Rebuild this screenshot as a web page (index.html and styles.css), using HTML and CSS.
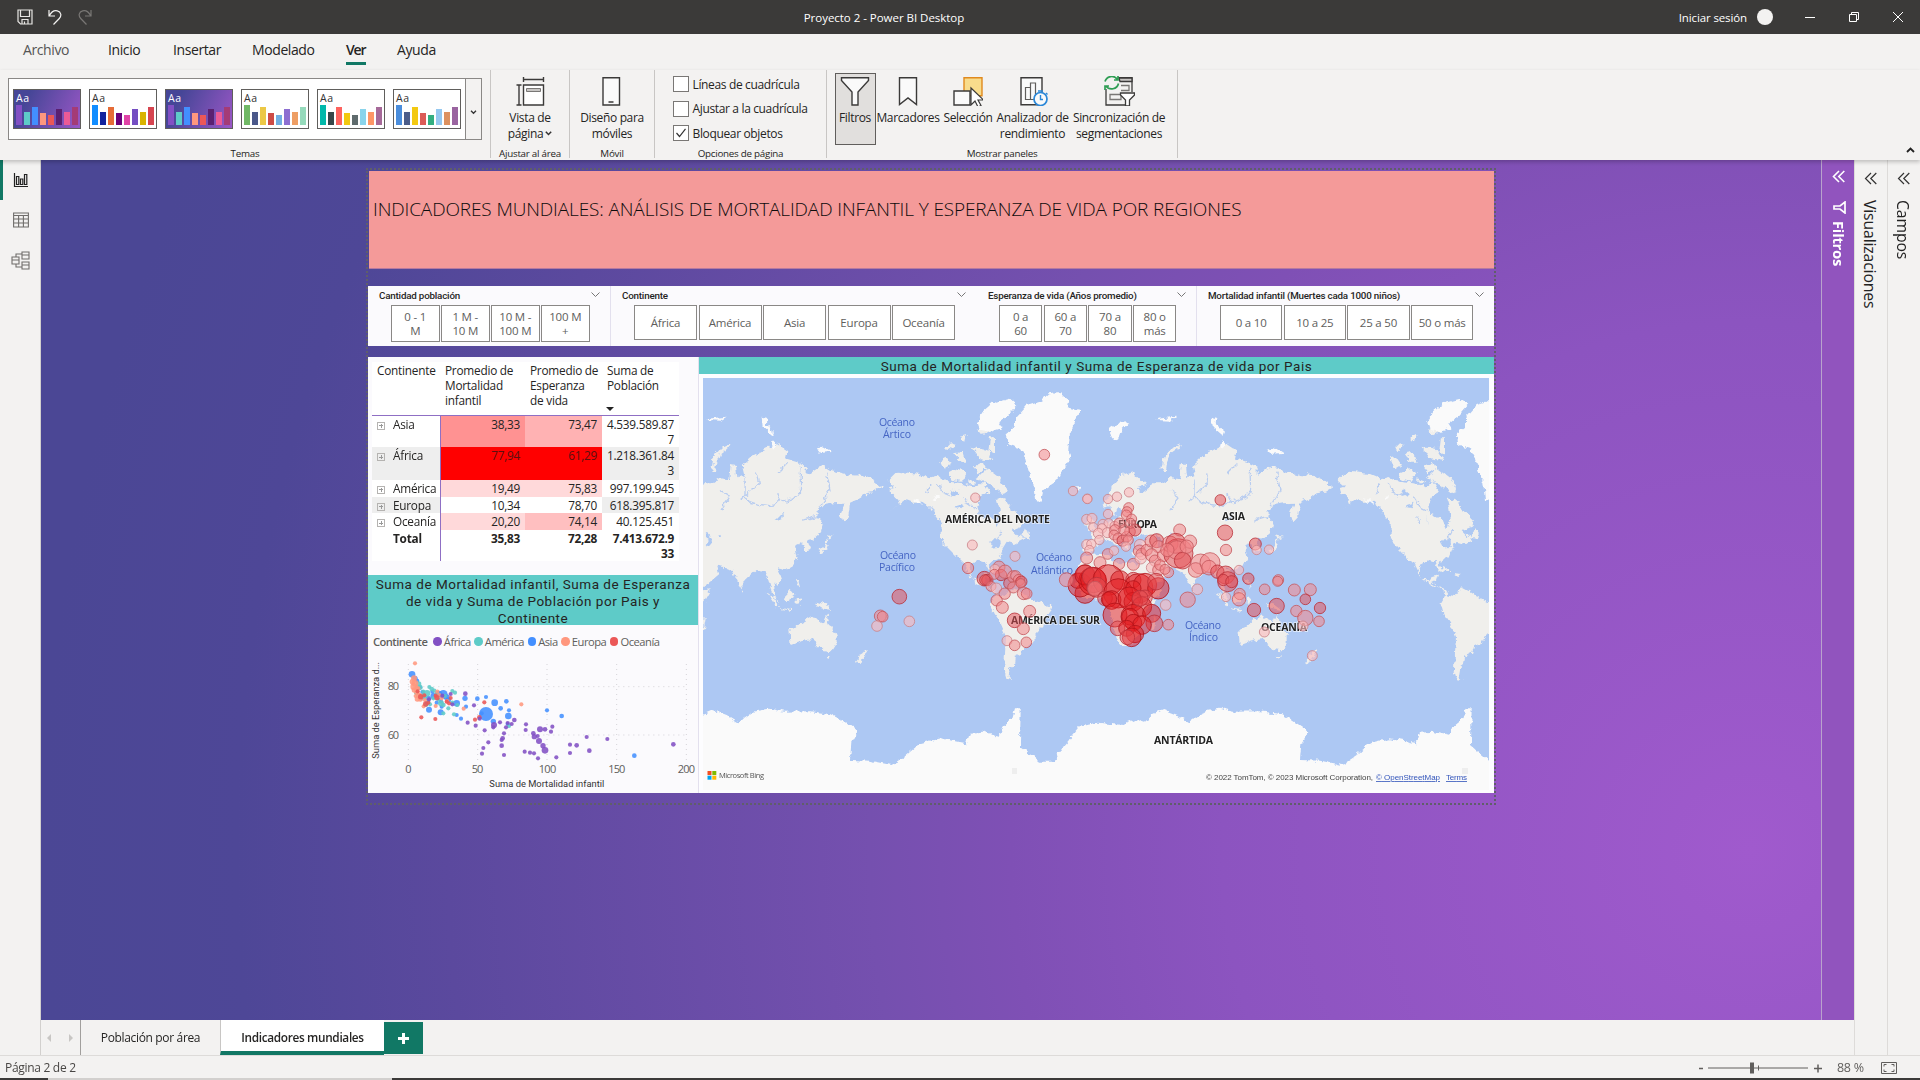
FILE: index.html
```html
<!DOCTYPE html>
<html lang="es">
<head>
<meta charset="utf-8">
<title>Proyecto 2 - Power BI Desktop</title>
<link rel="stylesheet" href="styles.css">
</head>
<body>
<header class="titlebar">
  <div class="quick">
    <svg width="16" height="16" viewBox="0 0 16 16" fill="none" stroke="#e8e6e4" stroke-width="1.2"><path d="M1 1h14v14H3.5L1 12.500zM3.500 1v6.500h9V1M5 15v-4.500h6V15M7.500 12.500V15"/></svg>
    <svg width="16" height="16" viewBox="0 0 16 16" fill="none" stroke="#f3f2f1" stroke-width="1.2"><path d="M2 1v6h6M2.300 6.700C4 3.500 7 1 10.300 1.800c4 1 4.500 5 2 7.700L6.500 15.500"/></svg>
    <svg width="16" height="16" viewBox="0 0 16 16" fill="none" stroke="#797775" stroke-width="1.200"><path d="M14 1v6H8M13.700 6.700C12 3.500 9 1 5.700 1.800c-4 1-4.500 5-2 7.700l5.800 6"/></svg>
  </div>
  <div class="app-title">Proyecto 2 - Power BI Desktop</div>
  <div class="window">
    <span class="signin">Iniciar sesión</span><span class="avatar"></span>
    <svg width="10" height="10" viewBox="0 0 10 10" stroke="#fff" fill="none"><path d="M0 5.500h10"/></svg>
    <svg width="10" height="10" viewBox="0 0 10 10" stroke="#fff" fill="none"><path d="M.5 2.500h7v7h-7zM2.500 2.500v-2h7v7h-2"/></svg>
    <svg width="10" height="10" viewBox="0 0 10 10" stroke="#fff" fill="none"><path d="M0 0l10 10M10 0L0 10"/></svg>
  </div>
</header>

<nav class="menu">
  <span class="m-archivo">Archivo</span><span class="m-inicio">Inicio</span><span class="m-insertar">Insertar</span><span class="m-modelado">Modelado</span><span class="m-ver active">Ver</span><span class="m-ayuda">Ayuda</span>
</nav>

<section class="ribbon">
  <div class="group g-themes">
    <div class="gallery"><div class="thumbs" id="thumbs"></div><div class="more"><svg width="7" height="5" viewBox="0 0 7 5" fill="none" stroke="#333" stroke-width="1.300"><path d="M1 .8l2.500 2.500L6 .8"/></svg></div></div>
    <div class="caption">Temas</div>
  </div>
  <div class="group g-view">
    <div class="btn"><svg width="30" height="30" viewBox="0 0 30 30" fill="none" stroke="#3b3a39" stroke-width="1.400"><path d="M8.500 9h20v20h-20z" fill="#fff"/><path d="M11.500 12.500h14v3h-14z" fill="#c8c6c4" stroke="#797775" stroke-width="1"/><path d="M8.500 3.500h20M8.500 1v5M28.500 1v5M4 9v20M1.500 9h5M1.500 29h5"/></svg><span>Vista de<br>página<svg class="mini" width="7" height="5" viewBox="0 0 7 5" fill="none" stroke="#333" stroke-width="1.500"><path d="M.8.800l2.700 2.700L6.200.800"/></svg></span></div>
    <div class="caption">Ajustar al área</div>
  </div>
  <div class="group g-mobile">
    <div class="btn"><svg width="30" height="30" viewBox="0 0 30 30" fill="#fafafa" stroke="#3b3a39" stroke-width="1.400"><path d="M6 1.700h16.500v27.300H6zM11.500 26h5"/></svg><span>Diseño para<br>móviles</span></div>
    <div class="caption">Móvil</div>
  </div>
  <div class="group g-options">
    <div class="checks">
      <label><i></i>Líneas de cuadrícula</label>
      <label><i></i>Ajustar a la cuadrícula</label>
      <label><i><svg width="12" height="10" viewBox="0 0 12 10" fill="none" stroke="#333" stroke-width="1.200"><path d="M1.500 5l3 3.500L10.500.800"/></svg></i>Bloquear objetos</label>
    </div>
    <div class="caption">Opciones de página</div>
  </div>
  <div class="group g-panels">
    <div class="panel-btns">
      <div class="btn b1 pressed"><svg width="30" height="30" viewBox="0 0 30 30" fill="#fafafa" stroke="#3b3a39" stroke-width="1.400"><path d="M1.500 1.700h27v2.800L18 16v13h-6V16L1.500 4.500z"/></svg><span>Filtros</span></div>
      <div class="btn b2"><svg width="30" height="30" viewBox="0 0 30 30" fill="#fafafa" stroke="#3b3a39" stroke-width="1.400"><path d="M6.500 1.700h17V28.500L15 22l-8.500 6.500z"/></svg><span>Marcadores</span></div>
      <div class="btn b3"><svg width="30" height="30" viewBox="0 0 30 30"><path d="M11 1.700h18v18H11z" fill="#f8dc8c" stroke="#e08a1e" stroke-width="1.400"/><path d="M1 15h16v14H1z" fill="#fafafa" stroke="#3b3a39" stroke-width="1.400"/><path d="M18 12v17l4-4 3 6 3-1.500-3-5.500h5.500z" fill="#fff" stroke="#3b3a39" stroke-width="1.200"/></svg><span>Selección</span></div>
      <div class="btn b4"><svg width="30" height="30" viewBox="0 0 30 30" fill="none" stroke="#3b3a39" stroke-width="1.400"><path d="M3 1.700h21v27H3z" fill="#fafafa"/><path d="M7.500 11.500h5v12h-5zM12.500 7h5v16.500h-5z" stroke="#605e5c" stroke-width="1.200"/><circle cx="22.500" cy="23" r="6.500" fill="#fafafa" stroke="#2b88d8" stroke-width="1.700"/><path d="M22.500 19v4.500H25M20 15h5M28 17l1.500 1.500" stroke="#2b88d8"/></svg><span>Analizador de<br>rendimiento</span></div>
      <div class="btn b5"><svg width="32" height="30" viewBox="0 0 32 30" fill="none" stroke="#3b3a39" stroke-width="1.300"><path d="M3 13v16h20M15 1.700h14V16" /><path d="M16 2h13v3.500H17z" fill="#c8c6c4"/><path d="M18 9.500h8v5h-8M7 18.500h11v5H7z" stroke="#797775"/><path d="M17.500 17h14v2L26.500 24v6h-4v-6l-5-5z" fill="#fff"/><path d="M2 5.500a7 7 0 0 1 12.500-2M15.500 7.500a7 7 0 0 1-12.500 2.500M15 0v4h-4M2 14v-4h4" stroke="#2f9e54" stroke-width="1.700"/></svg><span>Sincronización de<br>segmentaciones</span></div>
    </div>
    <div class="caption">Mostrar paneles</div>
  </div>
  <svg class="collapse" width="9" height="6" viewBox="0 0 9 6" fill="none" stroke="#222" stroke-width="1.800"><path d="M1 5l3.500-3.500L8 5"/></svg>
</section>

<main class="main">
  <aside class="rail">
    <div class="r on"><svg width="16" height="16" viewBox="0 0 16 16" fill="none" stroke="#222" stroke-width="1.200"><path d="M1.500 1v13.500H15M3.500 4.500h2.300v8H3.500zM7.500 7h2.300v5.500H7.500zM11.500 2.500h2.300v10h-2.300z"/></svg></div>
    <div class="r"><svg width="16" height="16" viewBox="0 0 16 16" fill="none" stroke="#6f6d6b" stroke-width="1.100"><path d="M.6 1h14.800v14H.6zM.6 3.500h14.800M.6 7h14.800M.6 11h14.800M5.600 3.500V15M10.400 3.500V15"/></svg></div>
    <div class="r"><svg width="19" height="19" viewBox="0 0 19 19" fill="none" stroke="#6f6d6b" stroke-width="1.100"><path d="M1 6h7v7H1zM1 9h7M11 1h7v7h-7zM11 4h7M11 11h7v7h-7zM11 14h7M5 6V3h6M5 13v3h6"/></svg></div>
  </aside>

  <div class="center">
    <div class="canvas">
      <div class="page">
        <div class="banner">INDICADORES MUNDIALES: ANÁLISIS DE MORTALIDAD INFANTIL Y ESPERANZA DE VIDA POR REGIONES</div>
        <div class="slicers">
          <div class="slicer s1"><div class="s-head">Cantidad población<svg width="9" height="6" viewBox="0 0 9 6"><path d="M.5.500l4 4 4-4"/></svg></div><div class="opts tall"><b>0 - 1<br>M</b><b>1 M -<br>10 M</b><b>10 M -<br>100 M</b><b>100 M<br>+</b></div></div>
          <div class="slicer s2"><div class="s-head">Continente<svg width="9" height="6" viewBox="0 0 9 6"><path d="M.5.500l4 4 4-4"/></svg></div><div class="opts"><b>África</b><b>América</b><b>Asia</b><b>Europa</b><b>Oceanía</b></div></div>
          <div class="slicer s3"><div class="s-head">Esperanza de vida (Años promedio)<svg width="9" height="6" viewBox="0 0 9 6"><path d="M.5.500l4 4 4-4"/></svg></div><div class="opts tall"><b>0 a<br>60</b><b>60 a<br>70</b><b>70 a<br>80</b><b>80 o<br>más</b></div></div>
          <div class="slicer s4"><div class="s-head">Mortalidad infantil (Muertes cada 1000 niños)<svg width="9" height="6" viewBox="0 0 9 6"><path d="M.5.500l4 4 4-4"/></svg></div><div class="opts"><b>0 a 10</b><b>10 a 25</b><b>25 a 50</b><b>50 o más</b></div></div>
        </div>
        <div class="content">
          <div class="left">
            <table class="matrix">
              <colgroup><col class="c1"><col class="c2"><col class="c3"><col class="c4"></colgroup>
              <thead><tr><th>Continente</th><th>Promedio de<br>Mortalidad<br>infantil</th><th>Promedio de<br>Esperanza<br>de vida</th><th>Suma de<br>Población<i class="sort"></i></th></tr></thead>
              <tbody>
                <tr class="two"><td><i class="exp"></i>Asia</td><td class="p3">38,33</td><td class="p2">73,47</td><td>4.539.589.87<br>7</td></tr>
                <tr class="two alt"><td><i class="exp"></i>África</td><td class="p4">77,94</td><td class="p4">61,29</td><td>1.218.361.84<br>3</td></tr>
                <tr><td><i class="exp"></i>América</td><td class="p1">19,49</td><td class="p1">75,83</td><td>997.199.945</td></tr>
                <tr class="alt"><td><i class="exp"></i>Europa</td><td class="p0">10,34</td><td class="p0">78,70</td><td>618.395.817</td></tr>
                <tr><td><i class="exp"></i>Oceanía</td><td class="p1">20,20</td><td class="p2b">74,14</td><td>40.125.451</td></tr>
                <tr class="total"><td>Total</td><td>35,83</td><td>72,28</td><td>7.413.672.9<br>33</td></tr>
              </tbody>
            </table>
            <div class="teal three">Suma de Mortalidad infantil, Suma de Esperanza<br>de vida y Suma de Población por Pais y<br>Continente</div>
            <div class="legend"><strong>Continente</strong><span class="k1">África</span><span class="k2">América</span><span class="k3">Asia</span><span class="k4">Europa</span><span class="k5">Oceanía</span></div>
            <svg class="scatter" width="331" height="137" viewBox="9 258 993 411">
              <path class="grid" d="M130 282V570M338 282V570M546 282V570M755 282V570M964 282V570M130 350H964M130 495H964"/>
              <g id="dots"></g>
              <g class="tick">
                <text x="68" y="360" textLength="34">80</text><text x="68" y="507" textLength="34">60</text>
                <text x="121" y="609" textLength="18">0</text><text x="320" y="609" textLength="35">50</text><text x="521" y="609" textLength="53">100</text><text x="730" y="609" textLength="51">150</text><text x="938" y="609" textLength="52">200</text>
              </g>
              <text class="axis" x="373" y="650" textLength="345">Suma de Mortalidad infantil</text>
              <text class="axis" transform="translate(43 566) rotate(-90)" textLength="290">Suma de Esperanza d...</text>
            </svg>
          </div>
          <div class="right">
            <div class="teal one">Suma de Mortalidad infantil y Suma de Esperanza de vida por Pais</div>
            <svg class="map" width="786" height="412" viewBox="703 378 786 412">
              <defs>
                <filter id="coast" x="-2%" y="-2%" width="104%" height="104%"><feTurbulence type="fractalNoise" baseFrequency=".16" numOctaves="3" seed="4" result="n"/><feDisplacementMap in="SourceGraphic" in2="n" scale="7" xChannelSelector="R" yChannelSelector="G"/></filter>
                <g id="world">
                  <g transform="translate(700 350) scale(.33333)">
                    <path class="land" d="M563 392L590 365 625 368 660 372 690 385 715 378 745 395 790 400 830 412 850 395 868 425 842 440 832 470 838 490 858 500 882 512 892 535 902 505 897 470 890 445 915 450 935 480 950 490 975 515 965 527 935 540 955 560 978 565 945 582 920 575 905 600 897 620 872 632 866 645 878 665 866 663 858 634 835 630 818 642 808 665 815 685 835 690 845 677 864 674 858 693 845 700 872 715 885 720 892 733 915 738 935 712 960 725 990 745 1010 755 1050 768 1055 780 1035 805 1030 830 1010 850 995 880 972 890 966 910 945 920 942 945 930 955 926 980 938 990 920 986 912 960 915 910 918 860 900 820 880 790 872 760 888 732 862 712 835 700 810 680 790 640 770 620 750 600 730 580 722 560 722 520 700 490 690 470 670 455 640 455 620 448 590 470 570 486 600 463 595 450 575 430 570 415 585 410Z"/>
                    <path class="land" d="M720 325L738 320 755 345 735 358ZM745 370L775 355 800 370 785 395 755 390ZM830 385L860 355 900 385 925 425 905 432 880 412ZM735 295L750 280 765 285 745 300ZM780 260L800 255 795 275ZM765 310L790 305 800 335 775 335ZM815 290L860 300 880 330 840 325ZM820 350L850 335 860 355 835 370ZM895 460L915 445 935 480 955 495 935 500ZM830 240L858 225 868 245 845 258ZM870 262L885 262 885 310 865 305ZM975 535L990 545 985 565 965 560ZM868 655L885 655 900 667 875 664ZM910 670L935 672 925 680ZM805 385L820 390 825 400 805 400Z"/>
                    <path class="ice" d="M832 215L850 185 880 160 930 146 952 165 925 195 895 220 905 235 870 245 840 240ZM945 205L980 165 1020 152 1045 130 1080 126 1105 150 1100 175 1142 183 1125 215 1110 250 1105 300 1112 328 1088 360 1060 400 1030 420 1022 452 1005 450 1000 400 985 360 975 320 960 295 925 285 920 250 945 232Z"/>
                    <path class="lake" d="M755 425L770 420 775 435 760 440ZM765 470L790 462 785 474ZM868 572L900 570 905 590 880 592ZM830 500L835 525"/>
                    <path class="river" d="M715 400L725 425 760 440M790 440L810 470 830 480M800 500L815 520M690 400L680 430M905 540L890 570"/>
                    <path class="ice" d="M640 445L655 448 672 464 660 462ZM700 438L716 436 716 446 704 448Z"/>
                  </g>
                  <g transform="translate(1080 350) scale(.33333)">
                    <path class="land" d="M65 470L85 440 95 410 125 375 155 365 198 405 170 415 188 428 205 415 215 400 245 400 270 385 298 388 302 342 318 345 322 385 345 375 338 345 365 320 400 300 440 280 470 300 465 325 500 335 530 350 530 375 560 355 580 348 600 360 660 375 700 378 730 390 757 412 735 425 710 430 690 445 660 458 655 500 640 517 632 490 645 458 610 460 580 465 563 485 562 502 578 520 570 550 548 568 532 570 542 600 525 605 512 580 495 587 502 620 490 645 465 660 442 655 455 690 445 705 430 697 438 735 450 760 435 745 422 715 415 690 400 662 380 660 347 690 335 715 323 695 310 665 290 655 262 650 268 672 235 700 207 720 190 690 168 655 182 628 160 625 150 605 185 600 195 590 170 560 150 575 140 600 125 575 110 570 125 590 105 585 90 567 60 575 45 600 15 610 10 575 35 570 30 550 60 530 85 515 110 510 125 485 115 470 105 500 92 495 88 465Z"/>
                    <path class="land" d="M10 620L55 612 85 612 90 628 120 640 165 640 180 665 195 695 210 722 242 718 225 748 198 785 195 815 175 850 150 885 120 885 105 850 95 800 85 765 65 745 20 747-10 715-10 680ZM215 815L228 800 222 835 210 840ZM25 540L18 520 30 500 45 525 50 540ZM410 728L425 735 448 770 440 772ZM458 745L480 722 490 730 480 756 462 755ZM555 755L580 760 608 780 590 778 565 770ZM450 772L485 778 482 782 452 778ZM500 745L515 742 508 765 500 762ZM565 600L585 590 590 565 595 568 590 598 570 608ZM588 555L608 560 595 566ZM495 680L505 690 512 715 500 700ZM335 718L342 722 338 728ZM675 940L702 903 712 900 690 938ZM590 918L602 918 598 928Z"/>
                    <path class="land" d="M478 835L482 885 510 875 542 868 565 885 580 900 605 904 620 880 620 855 602 830 588 796 578 820 562 808 545 798 515 815 500 830Z"/>
                    <path class="ice" d="M88 235L110 222 145 220 125 240 110 280 95 262ZM395 200L412 205 410 225 435 245 430 258 398 230ZM425 270L440 285 430 300 420 290ZM225 210L245 205 290 200 270 212ZM560 300L580 292 610 308 570 312ZM-15 408L5 412-5 425Z"/>
                    <path class="land" d="M244 360L250 325 275 295 303 282 298 292 270 312 258 340 255 360Z"/>
                    <path class="lake" d="M228 550L240 560 245 590 235 585ZM165 560L200 555 205 570 175 575ZM438 508L460 485 450 512ZM265 555L275 550 275 560Z"/>
                    <path class="river" d="M345 385C350 430 330 450 375 460S440 470 450 450M380 370L385 400 330 450M515 350C500 390 530 430 490 445S450 460 440 430M590 370L600 420 570 470M270 420L300 440 270 480M470 340L440 370M560 500L520 510"/>
                    <path class="ice" d="M0 1130L50 1118 130 1125 172 1108 195 1115 222 1092 250 1080 290 1095 325 1117 370 1085 420 1076 460 1085 540 1084 600 1092 635 1110 685 1143 664 1180 660 1230 720 1232 785 1245 830 1215 870 1180 930 1165 1010 1180 1020 1148 1060 1145 1110 1158 1120 1130 1145 1110 1155 1075 1172 1075 1170 1185 1230 1235 1268 1235 1300 1190 1350 1130V1322H0Z"/>
                  </g>
                </g>
              </defs>
              <g filter="url(#coast)"><rect x="650" y="340" width="900" height="500" fill="#adc8f3"/><use href="#world" x="-450"/><use href="#world" x="450"/><use href="#world"/></g>
              <rect x="703" y="768" width="786" height="24" fill="#fafafa"/>
              <g class="sea">
                <text x="879" y="426" textLength="36">Océano</text><text x="883" y="438" textLength="28">Ártico</text>
                <text x="880" y="559" textLength="36">Océano</text><text x="879" y="571" textLength="36">Pacífico</text>
                <text x="1036" y="561" textLength="36">Océano</text><text x="1031" y="574" textLength="42">Atlántico</text>
                <text x="1185" y="629" textLength="36">Océano</text><text x="1189" y="641" textLength="29">Índico</text>
              </g>
              <g class="cont">
                <text x="945" y="523" textLength="105">AMÉRICA DEL NORTE</text><text x="1011" y="624" textLength="89">AMÉRICA DEL SUR</text><text x="1118" y="528" textLength="39">EUROPA</text><text x="1222" y="520" textLength="23">ASIA</text><text x="1261" y="631" textLength="46">OCEANÍA</text><text x="1154" y="744" textLength="59">ANTÁRTIDA</text>
              </g>
              <g id="bubbles"></g>
              <path d="M707.500 771h4v4h-4z" fill="#f25022"/><path d="M712.300 771h4v4h-4z" fill="#7fba00"/><path d="M707.500 775.700h4v4h-4z" fill="#00a4ef"/><path d="M712.300 775.700h4v4h-4z" fill="#ffb900"/>
              <text class="bing" x="719" y="778" textLength="45">Microsoft Bing</text>
              <rect x="1012" y="768" width="5" height="6" fill="#eee"/><rect x="1462" y="768" width="6" height="6" fill="#eee"/>
              <text class="copy" x="1206" y="780" textLength="167">© 2022 TomTom, © 2023 Microsoft Corporation,</text>
              <text class="copy link" x="1376" y="780" textLength="64">© OpenStreetMap</text><text class="copy link" x="1446" y="780" textLength="21">Terms</text>
            </svg>
          </div>
        </div>
      </div>
      <div class="filters"><svg width="13" height="13" viewBox="0 0 13 13" fill="none" stroke="#fff" stroke-width="1.600"><path d="M7 1L1.500 6.500 7 12M12.300 1L6.800 6.500l5.500 5.500"/></svg><svg class="fun" width="13" height="13" viewBox="0 0 13 13" fill="none" stroke="#fff" stroke-width="1.700"><path d="M12 1v11L7 8H1V5h6z"/></svg><span>Filtros</span></div>
    </div>
    <div class="tabs">
      <div class="arrows"><i class="la"></i><i class="ra"></i></div>
      <div class="tab t1">Población por área</div><div class="tab t2">Indicadores mundiales</div>
      <div class="add"><svg width="11" height="11" viewBox="0 0 11 11" stroke="#fff" stroke-width="3"><path d="M5.500 0v11M0 5.500h11"/></svg></div>
    </div>
  </div>
  <aside class="pane vis"><svg width="13" height="13" viewBox="0 0 13 13" fill="none" stroke="#333" stroke-width="1.200"><path d="M7 1L1.500 6.500 7 12M12.300 1L6.800 6.500l5.500 5.500"/></svg><span>Visualizaciones</span></aside>
  <aside class="pane"><svg width="13" height="13" viewBox="0 0 13 13" fill="none" stroke="#333" stroke-width="1.200"><path d="M7 1L1.500 6.500 7 12M12.300 1L6.800 6.500l5.500 5.500"/></svg><span>Campos</span></aside>
</main>
<footer class="status">
  <span>Página 2 de 2</span>
  <div class="zoom">
    <svg width="124" height="14" viewBox="0 0 124 14" fill="none" stroke="#605e5c"><path d="M0 7.500h4M115 7.500h8M119 3.500v8" stroke-width="1.500"/><path d="M9 7h100M59.500 4.500v5"/><path d="M51 1.500h4v11h-4z" fill="#605e5c" stroke="none"/></svg>
    <span>88 %</span>
    <svg width="17" height="14" viewBox="0 0 17 14" fill="none" stroke="#605e5c"><path d="M.5 1.500h15v11H.5z"/><path d="M3 5.500v-2h2.500M10.500 3.500H13v2M3 8.500v2h2.500M10.500 10.500H13v-2"/></svg>
  </div>
</footer>
<div class="edge"><i></i></div>
<script src="script.js"></script>
</body>
</html>
```
FILE: styles.css
```css
* { box-sizing: border-box; }
body { margin: 0; width: 1920px; height: 1080px; overflow: hidden; background: #f3f2f1; font-family: "Open Sans", "Noto Sans", sans-serif; font-size: 12px; letter-spacing: -.3px; color: #252423; display: flex; flex-direction: column; }
svg { display: block; flex: none; }
svg text { letter-spacing: 0; stroke: none; }
i { font-style: normal; display: block; }

.titlebar { height: 34px; background: #3b3a39; color: #fff; display: grid; grid-template-columns: 1fr auto 1fr; align-items: center; flex: none; }
.quick { display: flex; gap: 14px; padding-left: 17px; }
.app-title { font-size: 11.500px; letter-spacing: -.03px; transform: translateX(-76px); }
.window { display: flex; align-items: center; justify-content: flex-end; padding-right: 17px; gap: 34px; }
.signin { margin-right: -24px; letter-spacing: -.120px; font-size: 11.500px; }
.avatar { width: 16px; height: 16px; border-radius: 50%; background: #f3f2f1; margin-right: -2px; }

.menu { height: 36px; display: flex; padding-left: 23px; font-size: 14px; letter-spacing: -.4px; flex: none; line-height: 32px; }
.menu span { height: 31px; white-space: nowrap; }
.m-archivo { width: 85px; color: #555; }
.m-inicio { width: 65px; }
.m-insertar { width: 79px; }
.m-modelado { width: 94px; }
.menu .m-ver { width: 20px; font-weight: 600; border-bottom: 3px solid #117865; margin-right: 31px; letter-spacing: -1.200px; }

.ribbon { height: 90px; display: flex; position: relative; flex: none; z-index: 2; box-shadow: 0 2px 4px rgba(0,0,0,.22); background: #f3f2f1; }
.group { border-right: 1px solid #c8c6c4; height: 88px; display: flex; flex-direction: column; justify-content: space-between; align-items: center; }
.caption { font-size: 9.800px; letter-spacing: -.25px; line-height: 14px; height: 14px; margin-bottom: -3px; }
.g-themes { width: 491px; padding-top: 8px; }
.g-view { width: 79px; padding-top: 6px; }
.g-mobile { width: 85px; padding-top: 6px; }
.g-options { width: 172px; padding-top: 6px; }
.g-panels { width: 351px; padding-top: 3px; }
.gallery { width: 474px; height: 62px; border: 1px solid #8a8886; background: #fff; display: flex; align-self: flex-start; margin-left: 8px; }
.thumbs { width: 457px; display: flex; gap: 8px; padding: 10px 0 0 4px; border-right: 1px solid #8a8886; }
.more { flex: 1; display: grid; place-items: center; padding-top: 6px; background: #f3f2f1; }
.thumb { width: 68px; height: 40px; border: 1px solid #605e5c; background: #fff; font-size: 10.500px; line-height: 14px; letter-spacing: .7px; color: #333; padding: 1px 2px 0; display: flex; flex-direction: column; }
.thumb.dark { background: linear-gradient(115deg, #464697 20%, #9a57c6); color: #fff; }
.bars { display: flex; align-items: flex-end; gap: 2px; height: 20px; }
.bars i { width: 6px; }
.btn { display: flex; flex-direction: column; align-items: center; text-align: center; line-height: 16px; font-size: 12px; letter-spacing: -.35px; white-space: nowrap; }
.btn span { margin-top: 4px; }
.mini { display: inline-block; margin-left: 2px; vertical-align: 2px; }
.checks { display: flex; flex-direction: column; gap: 8.500px; width: 152px; margin-left: 16px; letter-spacing: -.350px; }
.checks label { display: flex; align-items: center; gap: 4px; height: 16px; white-space: nowrap; }
.checks i { width: 16px; height: 16px; border: 1px solid #797775; background: #fff; display: grid; place-items: center; }
.panel-btns { display: flex; width: 351px; padding-left: 8px; }
.panel-btns .btn { padding-top: 3px; height: 72px; }
.panel-btns .pressed { width: 41px; padding-top: 2px; border: 1px solid #605e5c; background: #e1dfdd; }
.b2 { width: 65px; } .b3 { width: 55px; } .b4 { width: 74px; } .b5 { width: 99px; }
.collapse { position: absolute; right: 5px; bottom: 7px; }

.main { height: 895px; display: flex; flex: none; }
.rail { width: 41px; border-right: 1px solid #d2d0ce; }
.r { height: 40px; display: grid; place-items: center; padding-left: 1px; }
.r.on { border-left: 3px solid #117865; padding-right: 2px; padding-left: 1px; }
.center { width: 1813px; }
.canvas { height: 860px; display: flex; background: radial-gradient(circle 1760px at 1709px 690px, #a05acd 0, #8c54c0 30%, #7f50b5 42%, #7550af 50%, #5b499e 74%, #4e4797 86%, #4b4795 97%); }
.page { margin: 8px 0 0 325px; width: 1130px; height: 637px; border: 2px dotted #605e6a; display: flex; flex-direction: column; flex: none; padding-left: 1px; }
.banner { height: 98px; margin-top: 1px; background: #f49a99; border-bottom: 1px solid #b77aa0; width: 1125px; font-weight: 300; font-size: 19px; letter-spacing: -.125px; line-height: 76px; padding-left: 4px; white-space: nowrap; color: #0d0c0c; flex: none; }
.slicers { display: flex; margin-top: 17px; height: 60px; background: #fbfafd; width: 1126px; flex: none; margin-left: -1px; }
.slicer { border-right: 1px solid #e3e0ee; }
.s1 { width: 243px; padding-left: 11px; }
.s2 { width: 364px; padding-left: 11px; border: 0; }
.s3 { width: 222px; padding-left: 13px; }
.s4 { flex: 1; padding-left: 11px; border: 0; }
.s-head { height: 18px; line-height: 20px; display: flex; justify-content: space-between; font-family: Roboto, sans-serif; font-weight: 500; font-size: 9.800px; letter-spacing: -.2px; white-space: nowrap; }
.s-head svg { fill: none; stroke: #777; margin-top: 6px; }
.s1 .s-head { padding-right: 10px; } .s2 .s-head { padding-right: 9px; } .s3 .s-head { padding-right: 10px; } .s4 .s-head { padding-right: 10px; }
.opts { display: flex; gap: 1.500px; height: 35px; margin-left: 12px; margin-top: 1px; }
.opts.tall { height: 37px; }
.opts b { font-weight: 400; font-size: 11.500px; letter-spacing: -.200px; line-height: 14px; color: #605e5c; border: 1px solid #8a8886; background: #fff; display: grid; place-items: center; text-align: center; }
.s1 b { width: 48.500px; } .s2 b { width: 63px; } .s3 b { width: 43.200px; } .s4 b { width: 62.200px; }
.s3 .opts { margin-left: 11px; }
.content { display: flex; margin-top: 11px; height: 436px; width: 1126px; margin-left: -1px; flex: none; }
.left { width: 331px; background: #fbfafd; display: flex; flex-direction: column; border-right: 1px solid #e3e0ee; flex: none; }
.matrix { margin: 5px 0 0 4px; width: 307px; table-layout: fixed; border-collapse: collapse; background: #fff; line-height: 15px; font-size: 11.800px; letter-spacing: -.25px; }
.matrix { height: 199px; flex: none; }
.c1 { width: 68px; } .c2 { width: 85px; } .c3 { width: 77px; } .c4 { width: 77px; }
.matrix th { font-weight: 400; text-align: left; vertical-align: top; padding: 1px 0 0 5px; height: 53px; border-bottom: 1px solid #8f6fc4; white-space: nowrap; letter-spacing: -.23px; }
.matrix td { text-align: right; vertical-align: top; padding: 1px 5px 0 0; line-height: 15px; height: 16.500px; }
.matrix td:first-child { text-align: left; padding-left: 21px; border-right: 1px solid #8f6fc4; position: relative; padding-right: 0; }
.matrix .two td { height: 32.300px; }
.matrix .total td { height: 31px; }
.alt { background: #eee; }
.total { font-weight: 700; }
.p0 { background: #fff; } .p1 { background: #ffd9da; } .p2 { background: #ffb2b3; } .p2b { background: #ffbfc0; } .p3 { background: #ff9292; } .p4 { background: #f00; color: #5a1010; }
.exp { position: absolute; left: 5px; top: 6px; width: 8px; height: 8px; border: 1px solid #b5b3b1; background: linear-gradient(#999, #999) center/4px 1px no-repeat, linear-gradient(#999, #999) center/1px 4px no-repeat; }
.sort { width: 0; height: 0; border: 4px solid transparent; border-top-color: #222; border-bottom: 0; margin: 14px 0 -14px -1px; }
.teal { background: #5ecbc8; font-family: Roboto, sans-serif; text-align: center; color: #252423; letter-spacing: .55px; font-size: 13.500px; white-space: nowrap; }
.three { height: 50px; margin-top: 14px; line-height: 17px; flex: none; letter-spacing: .52px; padding-top: 1px; }
.one { height: 17px; line-height: 18px; }
.legend { display: flex; height: 31px; align-items: center; padding: 2px 0 0 5px; color: #605e5c; font-size: 11.200px; letter-spacing: -.5px; flex: none; }
.legend strong { font-weight: 600; margin-right: 6px; letter-spacing: -.58px; }
.legend span { display: flex; align-items: center; gap: 2px; margin-right: 4px; }
.legend .k1, .legend .k2, .legend .k3, .legend .k4 { margin-right: 3.700px; }
.legend span::before { content: ""; width: 8.500px; height: 8.500px; border-radius: 50%; background: #8250c4; }
.legend .k2::before { background: #5ecbc8; } .legend .k3::before { background: #438fff; } .legend .k4::before { background: #ff977e; } .legend .k5::before { background: #eb5757; }
.grid { fill: none; stroke: #d5d3d8; stroke-width: 3; stroke-dasharray: 3 12; }
.tick { font-size: 33px; fill: #605e5c; }
.axis { font-family: Roboto, sans-serif; font-size: 28px; fill: #333; }
.right { flex: 1; background: #fdfdff; display: flex; flex-direction: column; }
.map { margin: 4px 0 0 4px; background: #adc8f3; }
.land { fill: #f0efec; } .ice { fill: #fafafa; } .lake { fill: #adc8f3; stroke: #adc8f3; } .river { fill: none; stroke: #b9cdf0; stroke-width: 4; }
.sea { font-size: 10.500px; fill: #4565c4; }
.cont { font-size: 10.500px; font-weight: 700; fill: #222; }
.cont text { stroke: #fff; stroke-width: 1.500px; paint-order: stroke; stroke-opacity: .7; }
.bing { font-size: 7.500px; fill: #555; }
.copy { font-family: "Liberation Sans", sans-serif; font-size: 8px; fill: #444; }
.copy.link { fill: #3355bb; text-decoration: underline; }
.filters { width: 33px; margin-left: auto; background: #9154be; border-left: 1px solid #b9a3cc; padding: 10px 0 0 10px; color: #fff; font-weight: 700; font-size: 14.800px; letter-spacing: -.25px; }
.fun { margin: 18px 0 7px 1px; }
.filters span, .pane span { writing-mode: vertical-rl; line-height: 16px; display: block; }
.filters span { margin-left: -1px; }
.pane { width: 33px; border-left: 1px solid #dddbd9; padding: 12px 0 0 9px; font-size: 15.800px; font-weight: 500; letter-spacing: -.15px; }
.pane span { margin: 15px 0 0 -2px; color: #222; }
.tabs { height: 35px; display: flex; }
.arrows { width: 40px; border-right: 1px solid #a19f9d; display: flex; align-items: center; gap: 18px; padding: 0 0 0 6px; }
.la, .ra { border: 4px solid transparent; width: 0; }
.la { border-right-color: #c8c6c4; border-left: 0; } .ra { border-left-color: #c8c6c4; border-right: 0; }
.tab { display: grid; place-items: center; line-height: 16px; }
.t1 { width: 139px; letter-spacing: -.34px; }
.t2 { width: 164px; background: #fff; border-bottom: 4px solid #117865; border-left: 1px solid #c8c6c4; font-weight: 600; font-size: 11.800px; letter-spacing: -.32px; padding-top: 3px; }
.add { width: 39px; height: 32px; background: #117865; margin-top: 2px; display: grid; place-items: center; }
.status { height: 23px; border-top: 1px solid #dddbd9; display: flex; justify-content: space-between; align-items: center; padding: 1px 22px 0 5px; color: #484644; flex: none; line-height: 18px; }
.zoom { display: flex; align-items: center; }
.zoom span { width: 44px; margin-left: 14px; font-size: 12.500px; color: #605e5c; }
.edge { height: 2px; background: #3b3a39; padding-left: 48px; flex: none; }
.edge i { width: 344px; height: 2px; background: #d2d0ce; }
```
FILE: script.js
```js
const NS = 'http://www.w3.org/2000/svg';

// Theme gallery: text class, then the bar colours; the heights are shared.
const heights = [20, 13, 18, 12, 10, 16, 13, 18];
const purple = ['#8250c4', '#5ecbc8', '#438fff', '#ff977e', '#eb5757', '#5b2071', '#ec5a96', '#a43b76'];
const themes = [
  ['dark', purple],
  ['', ['#118dff', '#12239e', '#e66c37', '#6b007b', '#e044a7', '#744ec2', '#d9b300', '#d64550']],
  ['dark', purple],
  ['', ['#70b865', '#4a588a', '#ecc846', '#cd4c46', '#71afe2', '#8d6fd1', '#ee9e64', '#95dabb']],
  ['', ['#01b8aa', '#374649', '#fd625e', '#f2c80f', '#5f6b6d', '#8ad4eb', '#fe9666', '#a66999']],
  ['', ['#4a8ddc', '#4c5d8a', '#f3c911', '#dc5b57', '#33ae81', '#95c8f0', '#dd915f', '#9a64a0']]
];
document.getElementById('thumbs').innerHTML = themes.map(([cls, cols]) =>
  `<div class="thumb ${cls}">Aa<div class="bars">${cols.map((c, i) => `<i style="height:${heights[i]}px;background:${c}"></i>`).join('')}</div></div>`).join('');

function circle(parent, x, y, r, attrs) {
  const c = document.createElementNS(NS, 'circle');
  c.setAttribute('cx', x); c.setAttribute('cy', y); c.setAttribute('r', r);
  for (const k in attrs) c.setAttribute(k, attrs[k]);
  parent.appendChild(c);
}

// Scatter: x, y, optional radius, grouped by colour.
const dots = document.getElementById('dots');
const series = {
  '#438fff': [[141,313,10],[150,325,8],[157,332,6],[165,352],[172,366],[190,385,8],[205,378,9],[222,372,10],[235,373,13],[245,382,9],[228,395],[192,419,9],[227,427,9],[230,410],[250,390,8],[275,400,10],[300,385,8],[303,410],[275,435],[288,446],[337,386,7],[363,381],[389,398,10],[407,415,7],[363,432,21],[424,394,7],[432,421],[430,438,10],[385,454,8],[546,421],[590,438,7],[808,557,7],[350,430],[428,462],[170,385],[215,398],[202,365],[185,400]],
  '#5ecbc8': [[161,342,8],[165,352,8],[193,351],[200,357,7],[208,362],[186,370,10],[180,382],[190,395],[215,370],[228,400,9],[235,405,7],[262,363],[270,368],[262,398],[277,405],[250,415],[235,430],[267,433],[154,370],[175,365],[205,385],[220,388],[183,405],[432,468],[195,403],[240,378],[173,376]],
  '#ff977e': [[150,280],[147,325,9],[143,335,9],[150,340,10],[146,350,10],[148,360,8],[155,365,8],[160,375,8],[157,387,8],[166,387,8],[152,378],[176,409],[217,365],[223,375],[230,385],[212,408],[246,393],[296,416],[469,403],[155,352],[215,380],[180,390],[160,355],[165,375]],
  '#eb5757': [[167,380,8],[158,364],[178,376],[182,402,8],[190,398],[216,383,8],[212,377],[245,395],[252,400],[169,442],[211,447],[330,449],[343,442,7],[358,397],[257,384]],
  '#8250c4': [[301,371,7],[257,372],[327,406],[308,458],[332,467],[344,446],[359,481],[387,465,9],[385,472],[405,457],[423,472],[428,459],[440,462],[448,450,7],[417,490],[413,505,7],[410,510],[410,527,7],[370,517],[355,534],[351,551],[417,555],[483,463],[482,480],[525,478,9],[540,478,7],[562,470],[558,485],[505,490,7],[508,500,8],[522,513,9],[518,498],[534,527,8],[540,541,10],[479,545],[495,548],[507,550],[519,565],[574,562],[615,524],[635,526,7],[615,549],[665,501],[673,542,7],[727,507],[925,523,7],[192,388],[262,403],[232,377]]
};
for (const col in series) for (const [x, y, r] of series[col]) circle(dots, x, y, r || 6.2, { fill: col, 'fill-opacity': .88 });

// Map bubbles: x, y, radius, intensity 0-3.
const fills = ['rgba(250,185,188,.62)', 'rgba(242,135,138,.55)', 'rgba(228,78,84,.52)', 'rgba(228,28,32,.5)'];
const lines = ['#c98288', '#c4575c', '#b93038', '#b01218'];
const west = [[1033,314,16,1],[826,443,14,0],[817,585,15,0],[804,654,17,1],[945,619,15,0],[1119,423,14,0],[1162,446,14,0],
  [853,686,22,2],[862,690,17,2],[855,690,16,2],[897,651,18,1],[885,658,15,0],[903,675,17,2],[915,665,20,1],[883,673,15,1],[873,709,15,1],[889,715,16,0],[928,700,17,2],[940,680,18,1],[947,677,15,1],[957,690,17,1],[964,695,17,2],[940,712,17,1],[962,700,14,1],[914,731,17,1],[890,751,17,1],[907,772,18,1],[971,730,19,1],[980,731,16,1],[944,811,22,2],[989,784,18,1],[970,836,18,1],[921,872,15,0],[944,886,16,1],[979,877,16,1],
  [598,740,22,2],[541,798,18,1],[548,800,16,1],[531,828,16,0],[628,814,16,0],[1155,730,30,3],[1140,705,36,3],[1132,692,23,3],[1155,670,26,2],[1178,694,42,3],[1185,717,22,2],[1099,689,21,1]];
const east = [[22,447,14,0],[147,427,14,0],[111,440,14,0],[84,447,14,0],[146,473,15,1],[141,485,15,1],[139,495,15,1],[84,492,14,0],[20,508,15,0],[36,505,15,0],[40,532,14,0],[69,523,15,0],[86,520,14,0],[66,535,14,0],[55,550,15,0],[82,548,15,0],[58,570,14,0],[104,528,14,0],[118,520,16,1],[105,540,16,1],[102,555,15,1],[115,565,16,1],[128,572,17,2],[140,560,16,1],[150,545,16,1],[165,540,18,2],[155,507,15,1],[132,540,16,1],[145,570,15,1],[138,590,14,0],[152,520,15,1],[20,584,15,0],[34,582,14,0],[28,600,14,0],[20,624,18,1],[60,638,18,1],[83,612,16,1],[102,602,14,0],[117,642,17,1],[160,643,18,1],
  [180,585,17,0],[178,603,18,1],[185,612,17,1],[182,625,17,0],[200,600,17,1],[213,573,18,1],[230,572,21,2],[235,590,18,1],[215,615,19,1],[225,632,17,1],[250,617,18,1],[215,653,16,0],[235,660,17,1],[265,667,16,1],[240,645,16,1],[255,658,15,1],
  [299,540,18,1],[270,582,24,1],[295,610,44,2],[287,580,30,2],[330,575,20,1],[290,600,28,1],[308,632,25,2],[262,600,20,1],[320,590,20,1],
  [421,450,16,2],[435,548,23,2],[438,600,17,1],[526,582,18,2],[530,600,14,0],[567,599,14,0],[477,660,14,0],[352,718,16,0],[323,749,23,1],[362,642,30,1],[347,660,22,1],[390,638,30,1],[387,653,22,1],[412,665,20,2],[437,675,27,2],[443,695,30,2],[430,690,17,2],[455,695,18,2],[438,741,14,0],[479,732,17,1],[477,748,20,1],[505,686,17,2],[554,718,16,1],[595,690,16,1],[593,694,15,1],[643,720,18,1],[691,719,18,1],[676,748,16,2],[720,774,17,2],[717,814,16,1],[649,783,17,1],[676,804,23,1],[669,828,15,0],[590,768,23,2],[522,780,20,2],[553,846,15,0],[697,917,15,0],
  [15,675,30,3],[40,690,38,3],[35,680,28,2],[85,690,46,3],[50,712,30,2],[45,716,22,1],[120,690,28,3],[160,690,23,2],[175,715,44,3],[115,730,44,3],[195,705,35,3],[235,715,32,3],[228,695,25,2],[75,745,22,2],[95,750,28,3],[87,748,23,3],[160,715,23,3],[195,742,22,2],[105,795,36,3],[160,755,28,3],[148,745,34,3],[185,770,30,3],[160,800,37,3],[215,790,27,3],[223,820,25,2],[113,835,22,2],[150,800,25,3],[160,818,25,3],[186,825,28,3],[140,835,24,3],[165,852,26,3],[155,862,28,3],[142,862,22,2],[257,765,16,0],[265,824,16,1],[180,745,24,2]];
const bubbles = document.getElementById('bubbles');
for (const [list, ox] of [[west, 700], [east, 1080]])
  for (const [x, y, r, k] of list) circle(bubbles, ox + x / 3, 350 + y / 3, r / 3, { fill: fills[k], stroke: lines[k], 'stroke-width': .8 });
```
